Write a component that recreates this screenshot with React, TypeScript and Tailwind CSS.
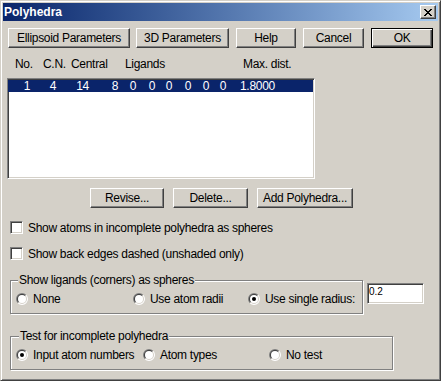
import React from "react";

const raised =
  "border border-t-white border-l-white border-r-[#404040] border-b-[#404040] shadow-[inset_-1px_-1px_0_#808080]";
const sunken =
  "border border-t-[#808080] border-l-[#808080] border-r-white border-b-white shadow-[inset_1px_1px_0_#404040,inset_-1px_-1px_0_#d4d0c8]";

const Btn = ({ className, children, isDefault }: { className: string; children: React.ReactNode; isDefault?: boolean }) => (
  <div
    className={`h-[20px] flex items-center justify-center pb-[1px] ${
      isDefault
        ? "border border-black shadow-[inset_1px_1px_0_#fff,inset_-1px_-1px_0_#404040,inset_-2px_-2px_0_#808080]"
        : raised
    } ${className}`}
  >
    {children}
  </div>
);

const Radio = ({ checked }: { checked?: boolean }) => (
  <svg width="12" height="12" viewBox="0 0 12 12" className="shrink-0">
    <path d="M1.757 10.243A6 6 0 0 1 10.243 1.757Z" fill="#808080" />
    <path d="M10.243 1.757A6 6 0 0 1 1.757 10.243Z" fill="#fff" />
    <path d="M2.464 9.536A5 5 0 0 1 9.536 2.464Z" fill="#404040" />
    <path d="M9.536 2.464A5 5 0 0 1 2.464 9.536Z" fill="#d4d0c8" />
    <circle cx="6" cy="6" r="4" fill="#fff" />
    {checked && <circle cx="6" cy="6" r="2" fill="#000" />}
  </svg>
);

const RadioItem = ({ label, checked, className }: { label: string; checked?: boolean; className?: string }) => (
  <div className={`flex items-center ${className ?? ""}`}>
    <Radio checked={checked} />
    <span className="ml-[5px]">{label}</span>
  </div>
);

const Check = ({ label }: { label: string }) => (
  <div className="mt-[13px] ml-[7px] flex items-center h-[13px]">
    <div className={`w-[13px] h-[13px] bg-white ${sunken}`} />
    <span className="ml-[5px]">{label}</span>
  </div>
);

const closeRows = ["11....11", ".11..11.", "..1111..", "...11...", "..1111..", ".11..11.", "11....11"];

export default function App() {
  const cells: [string, string][] = [
    ["1", "w-[22px]"],
    ["4", "w-[26px]"],
    ["14", "w-[33px]"],
    ["8", "w-[29px]"],
    ["0", "w-[18px]"],
    ["0", "w-[19px]"],
    ["0", "w-[17px]"],
    ["0", "w-[19px]"],
    ["0", "w-[18px]"],
    ["0", "w-[17px]"],
  ];

  return (
    <div className="w-[441px] h-[381px] bg-[#d4d0c8] border border-t-[#d4d0c8] border-l-[#d4d0c8] border-r-[#404040] border-b-[#404040] shadow-[inset_1px_1px_0_#fff,inset_-1px_-1px_0_#808080] p-[2px] font-['Liberation_Sans',Arial,sans-serif] text-[12px] leading-[14px] text-black flex flex-col overflow-hidden">
      {/* title bar */}
      <div className="h-[18px] shrink-0 flex items-center bg-linear-to-r from-[#0a246a] to-[#a6caf0]">
        <span className="pl-[1px] font-bold text-white">Polyhedra</span>
        <div className={`ml-auto mr-[2px] w-[16px] h-[14px] bg-[#d4d0c8] flex items-center justify-center ${raised}`}>
          <svg width="8" height="7" viewBox="0 0 8 7" shapeRendering="crispEdges">
            {closeRows.map((row, y) =>
              row.split("").map((c, x) => (c === "1" ? <rect key={`${x}-${y}`} x={x} y={y} width="1" height="1" fill="#000" /> : null))
            )}
          </svg>
        </div>
      </div>

      <div className="flex flex-col tracking-[-0.3px]">
        {/* top buttons */}
        <div className="mt-[7px] ml-[5px] flex">
          <Btn className="w-[122px]">Ellipsoid Parameters</Btn>
          <Btn className="ml-[6px] w-[93px]">3D Parameters</Btn>
          <Btn className="ml-[7px] w-[60px]">Help</Btn>
          <Btn className="ml-[7px] w-[61px]">Cancel</Btn>
          <Btn className="ml-[7px] w-[62px]" isDefault>
            OK
          </Btn>
        </div>

        {/* column headers */}
        <div className="mt-[9px] ml-[12px] h-[14px] flex">
          <span className="w-[28px]">No.</span>
          <span className="w-[28px]">C.N.</span>
          <span className="w-[54px]">Central</span>
          <span className="w-[118px]">Ligands</span>
          <span>Max. dist.</span>
        </div>

        {/* list */}
        <div className={`mt-[7px] ml-[4px] w-[308px] h-[101px] bg-white pt-[1px] pr-[1px] ${sunken}`}>
          <div className="h-[12px] leading-[12px] bg-[#0a246a] text-white flex">
            {cells.map(([t, w], i) => (
              <span key={i} className={`${w} text-right`}>
                {t}
              </span>
            ))}
            <span className="pl-[14px]">1.8000</span>
          </div>
        </div>

        {/* list buttons */}
        <div className="mt-[9px] ml-[87px] flex">
          <Btn className="w-[74px]">Revise...</Btn>
          <Btn className="ml-[9px] w-[75px]">Delete...</Btn>
          <Btn className="ml-[9px] w-[96px]">Add Polyhedra...</Btn>
        </div>

        <Check label="Show atoms in incomplete polyhedra as spheres" />
        <Check label="Show back edges dashed (unshaded only)" />

        {/* ligand spheres */}
        <div className="mt-[13px] ml-[7px] flex items-start">
          <fieldset className="w-[353px] m-0 min-w-0 border border-[#808080] shadow-[1px_1px_0_#fff,inset_1px_1px_0_#fff] pl-[5px] pb-[7px]">
            <legend className="ml-[2px] px-[1px] bg-[#d4d0c8] leading-[14px]">Show ligands (corners) as spheres</legend>
            <div className="mt-[5px] h-[14px] flex items-center">
              <RadioItem label="None" className="w-[117px]" />
              <RadioItem label="Use atom radii" className="w-[115px]" />
              <RadioItem label="Use single radius:" checked />
            </div>
          </fieldset>
          <div className={`ml-[4px] mt-[10px] w-[57px] h-[21px] bg-white pl-[1px] pt-[2px] text-[10px] leading-[11px] tracking-normal ${sunken}`}>
            0.2
          </div>
        </div>

        {/* incomplete test */}
        <fieldset className="mt-[15px] ml-[7px] w-[383px] min-w-0 border border-[#808080] shadow-[1px_1px_0_#fff,inset_1px_1px_0_#fff] pl-[5px] pb-[7px]">
          <legend className="ml-[3px] px-[1px] bg-[#d4d0c8] leading-[14px]">Test for incomplete polyhedra</legend>
          <div className="mt-[5px] h-[14px] flex items-center">
            <RadioItem label="Input atom numbers" checked className="w-[127px]" />
            <RadioItem label="Atom types" className="w-[126px]" />
            <RadioItem label="No test" />
          </div>
        </fieldset>
      </div>
    </div>
  );
}
